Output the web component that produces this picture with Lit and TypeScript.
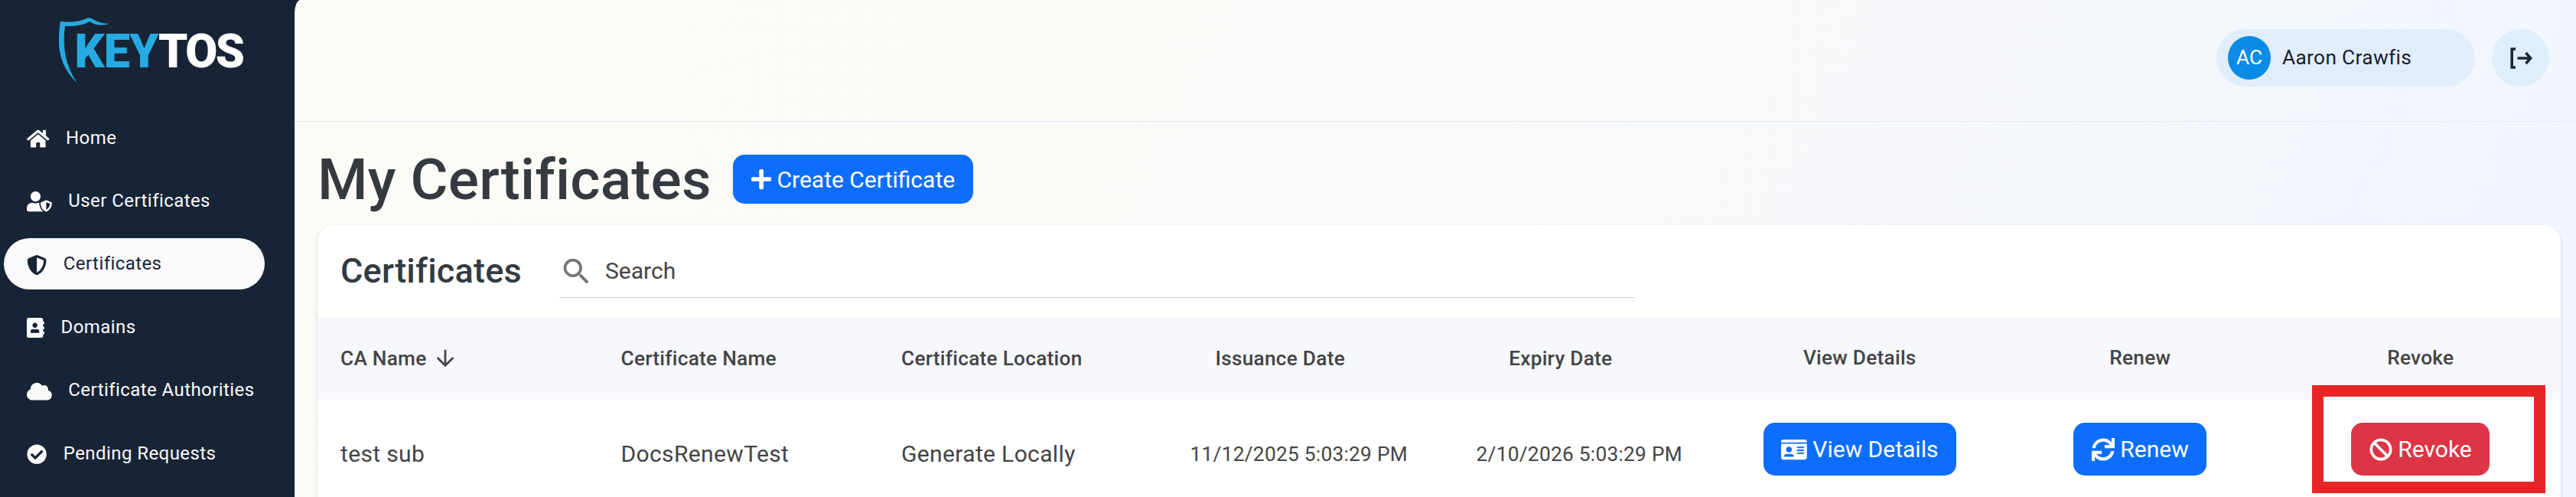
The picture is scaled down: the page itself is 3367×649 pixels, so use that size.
import { LitElement, html, svg, css } from "lit";
import { customElement } from "lit/decorators.js";

type Icon = { w: number; d: string };

const ICONS: Record<string, Icon> = {
  home: { w: 576, d: "M280.37 148.26L96 300.11V464a16 16 0 0 0 16 16l112.06-.29a16 16 0 0 0 15.92-16V368a16 16 0 0 1 16-16h64a16 16 0 0 1 16 16v95.64a16 16 0 0 0 16 16.05L464 480a16 16 0 0 0 16-16V300L295.67 148.26a12.19 12.19 0 0 0-15.3 0zM571.6 251.47L488 182.56V44.05a12 12 0 0 0-12-12h-56a12 12 0 0 0-12 12v72.61L318.47 43a48 48 0 0 0-61 0L4.34 251.47a12 12 0 0 0-1.6 16.9l25.5 31A12 12 0 0 0 45.15 301l235.22-193.74a12.19 12.19 0 0 1 15.3 0L530.9 301a12 12 0 0 0 16.9-1.6l25.5-31a12 12 0 0 0-1.7-16.93z" },
  userShield: { w: 640, d: "M622.3 271.1l-115.2-45c-4.1-1.6-12.6-3.7-22.2 0l-115.2 45c-10.7 4.2-17.7 14-17.7 24.9 0 111.6 68.7 188.8 132.9 213.9 9.6 3.7 18 1.6 22.2 0C558.4 489.9 640 420.5 640 296c0-10.9-7-20.7-17.7-24.9zM496 462.4V273.3l95.5 37.3c-5.6 87.1-60.9 135.4-95.5 151.8zM224 256c70.7 0 128-57.3 128-128S294.7 0 224 0 96 57.3 96 128s57.3 128 128 128zm96 40c0-2.5.8-4.8 1.1-7.2-2.5-.1-4.9-.8-7.5-.8h-16.7c-22.2 10.2-46.9 16-72.9 16s-50.6-5.8-72.9-16h-16.7C60.2 288 0 348.2 0 422.4V464c0 26.5 21.5 48 48 48h352c6.8 0 13.3-1.5 19.2-4-54-42.9-99.2-116.7-99.2-212z" },
  shield: { w: 512, d: "M466.5 83.7l-192-80a48.15 48.15 0 0 0-36.9 0l-192 80C27.7 91.1 16 108.6 16 128c0 198.5 114.5 335.7 221.5 380.3 11.8 4.9 25.1 4.9 36.9 0C360.1 472.6 496 349.3 496 128c0-19.4-11.7-36.9-29.5-44.3zM256.1 446.3l-.1-381 175.9 73.3c-3.3 151.4-82.1 261.1-175.8 307.7z" },
  book: { w: 448, d: "M436 160c6.6 0 12-5.4 12-12v-40c0-6.6-5.4-12-12-12h-20V48c0-26.5-21.5-48-48-48H48C21.5 0 0 21.5 0 48v416c0 26.5 21.5 48 48 48h320c26.5 0 48-21.5 48-48v-48h20c6.6 0 12-5.4 12-12v-40c0-6.6-5.4-12-12-12h-20v-64h20c6.6 0 12-5.4 12-12v-40c0-6.6-5.4-12-12-12h-20v-64h20zm-228-32c35.3 0 64 28.7 64 64s-28.7 64-64 64-64-28.7-64-64 28.7-64 64-64zm112 236.8c0 10.6-10 19.2-22.4 19.2H118.4C106 384 96 375.4 96 364.8v-19.2c0-31.8 30.1-57.6 67.2-57.6h5c12.3 5.1 25.7 8 39.8 8s27.6-2.9 39.8-8h5c37.1 0 67.2 25.8 67.2 57.6v19.2z" },
  cloud: { w: 640, d: "M537.6 226.6c4.1-10.7 6.4-22.4 6.4-34.6 0-53-43-96-96-96-19.7 0-38.1 6-53.3 16.2C367 64.2 315.3 32 256 32c-88.4 0-160 71.6-160 160 0 2.7.1 5.4.2 8.1C40.2 219.8 0 273.2 0 336c0 79.5 64.5 144 144 144h368c70.7 0 128-57.3 128-128 0-61.9-44-113.6-102.4-125.4z" },
  check: { w: 512, d: "M504 256c0 136.967-111.033 248-248 248S8 392.967 8 256 119.033 8 256 8s248 111.033 248 248zM227.314 387.314l184-184c6.248-6.248 6.248-16.379 0-22.627l-22.627-22.627c-6.248-6.249-16.379-6.249-22.628 0L216 308.118l-70.059-70.059c-6.248-6.248-16.379-6.248-22.628 0l-22.627 22.627c-6.248 6.248-6.248 16.379 0 22.627l104 104c6.249 6.249 16.379 6.249 22.628.001z" },
  plus: { w: 448, d: "M416 208H272V64c0-17.67-14.33-32-32-32h-32c-17.67 0-32 14.33-32 32v144H32c-17.67 0-32 14.33-32 32v32c0 17.67 14.33 32 32 32h144v144c0 17.67 14.33 32 32 32h32c17.67 0 32-14.33 32-32V304h144c17.67 0 32-14.33 32-32v-32c0-17.67-14.33-32-32-32z" },
  idCard: { w: 576, d: "M528 32H48C21.5 32 0 53.5 0 80v16h576V80c0-26.5-21.5-48-48-48zM0 432c0 26.5 21.5 48 48 48h480c26.5 0 48-21.5 48-48V128H0v304zm352-232c0-4.4 3.6-8 8-8h144c4.4 0 8 3.6 8 8v16c0 4.4-3.6 8-8 8H360c-4.4 0-8-3.6-8-8v-16zm0 64c0-4.4 3.6-8 8-8h144c4.4 0 8 3.6 8 8v16c0 4.4-3.6 8-8 8H360c-4.4 0-8-3.6-8-8v-16zm0 64c0-4.4 3.6-8 8-8h144c4.4 0 8 3.6 8 8v16c0 4.4-3.6 8-8 8H360c-4.4 0-8-3.6-8-8v-16zM176 192c35.3 0 64 28.7 64 64s-28.7 64-64 64-64-28.7-64-64 28.7-64 64-64zM67.1 396.2C75.5 370.5 99.6 352 128 352h8.2c12.3 5.1 25.7 8 39.8 8s27.6-2.9 39.8-8h8.2c28.4 0 52.5 18.5 60.9 44.2 3.2 9.9-5.2 19.8-15.6 19.8H82.7c-10.4 0-18.8-10-15.6-19.8z" },
  sync: { w: 512, d: "M440.65 12.57l4 82.77A247.16 247.16 0 0 0 255.83 8C134.73 8 33.91 94.92 12.29 209.82A12 12 0 0 0 24.09 224h49.05a12 12 0 0 0 11.67-9.26 175.91 175.91 0 0 1 317-56.94l-101.46-4.86a12 12 0 0 0-12.57 12v47.41a12 12 0 0 0 12 12H500a12 12 0 0 0 12-12V12a12 12 0 0 0-12-12h-47.37a12 12 0 0 0-11.98 12.57zM255.83 432a175.61 175.61 0 0 1-146-77.8l101.8 4.87a12 12 0 0 0 12.57-12v-47.4a12 12 0 0 0-12-12H12a12 12 0 0 0-12 12V500a12 12 0 0 0 12 12h47.35a12 12 0 0 0 12-12.6l-4.15-82.57A247.17 247.17 0 0 0 255.83 504c121.11 0 221.93-86.92 243.55-201.82a12 12 0 0 0-11.8-14.18h-49.05a12 12 0 0 0-11.67 9.26A175.86 175.86 0 0 1 255.83 432z" },
  ban: { w: 512, d: "M256 8C119.034 8 8 119.033 8 256s111.034 248 248 248 248-111.034 248-248S392.967 8 256 8zm130.108 117.892c65.448 65.448 70 165.481 20.677 235.637L150.47 105.216c70.204-49.356 170.226-44.735 235.638 20.676zM125.892 386.108c-65.448-65.448-70-165.481-20.677-235.637L361.53 406.784c-70.203 49.356-170.226 44.736-235.638-20.676z" },
};

const icon = (name: string) => {
  const i = ICONS[name];
  return html`<svg class="icon" viewBox="0 0 ${i.w} 512">${svg`<path d=${i.d}></path>`}</svg>`;
};

const NAV = [
  { icon: "home", label: "Home" },
  { icon: "userShield", label: "User Certificates" },
  { icon: "shield", label: "Certificates", active: true },
  { icon: "book", label: "Domains" },
  { icon: "cloud", label: "Certificate Authorities" },
  { icon: "check", label: "Pending Requests" },
];

@customElement("app-root")
export class AppRoot extends LitElement {
  static styles = css`
    :host {
      display: flex;
      height: 649px;
      overflow: hidden;
      background: #172436;
      color: #444;
      font-family: Roboto, sans-serif;
    }
    * { box-sizing: border-box; }
    svg { display: block; flex: none; }
    .icon { height: 1em; fill: currentColor; }

    .sidebar { flex: none; width: 385px; color: #fbf9fb; }
    .logo { display: block; margin: 20px 0 0 74px; width: 250px; height: 94px; }
    .logo text { font: 900 61px Roboto, sans-serif; }
    nav { display: flex; flex-direction: column; gap: 15.4px; padding: 32.7px 39px 0 5px; }
    .item {
      display: flex; align-items: center; gap: 21.5px;
      height: 67px; padding-left: 30px; border-radius: 34px;
      font-size: 24px; letter-spacing: 0.43px; white-space: nowrap;
    }
    .item .icon { font-size: 26.25px; margin-top: 2px; }
    .item span { margin-bottom: 1px; }
    .item.active { background: #fbf9fb; color: #172436; }

    .content {
      flex: 1; min-width: 0; height: 100%;
      border-top-left-radius: 8px 17px;
      background: linear-gradient(115deg, #fdfbf5 0%, #fbfaf7 32%, #f4f7fc 80%, #f0f5ff 100%);
    }
    header {
      display: flex; justify-content: flex-end; gap: 22px;
      height: 159px; padding: 38px 35px 0 0;
      border-bottom: 1px solid #e2e8f7;
    }
    .user {
      display: flex; align-items: center; width: 338px; height: 75px;
      padding-left: 15px; gap: 15px; border-radius: 38px;
      background: #e1edfb; color: #18202e;
      font-size: 26.25px; letter-spacing: 0.35px;
    }
    .user span { padding-bottom: 1px; }
    .avatar {
      display: flex; align-items: center; justify-content: center;
      width: 56px; height: 57px; border-radius: 50%;
      background: #0a8ce6; color: #fff; letter-spacing: 0;
    }
    .logout {
      display: flex; align-items: center; justify-content: center;
      width: 75px; height: 75px; border-radius: 50%; background: #dfeefb;
    }

    .heading { display: flex; align-items: flex-start; gap: 28.5px; height: 135px; padding: 30px 0 0 30px; }
    .heading .btn { margin-top: 13px; height: 64px; }
    h1 { margin: 0; font-size: 75px; line-height: 90px; font-weight: 500; letter-spacing: 0.22px; color: #343a40; }

    .btn {
      display: flex; align-items: center; gap: 7.5px; height: 69px;
      padding: 0 23.5px; border-radius: 15px;
      background: #0d6efd; color: #fff; font-size: 30px; white-space: nowrap;
    }
    .btn.danger { background: #dc3545; }

    .card {
      height: 400px; margin: 0 20px 0 30px; background: #fff;
      border-radius: 22px 22px 0 0;
      box-shadow: 0 2px 5px rgba(0, 0, 0, 0.15);
    }
    .toolbar { display: flex; height: 120px; padding: 23px 0 0 30px; }
    h2 { margin: 14px 0 0; width: 286px; font-size: 45px; line-height: 45px; font-weight: 500; letter-spacing: 0.22px; color: #343a40; }
    .search {
      display: flex; width: 1406px; height: 72px; padding-top: 15px; gap: 15px;
      border-bottom: 1px solid #c9cdda; font-size: 30px; line-height: 43px;
    }
    .row { display: grid; grid-template-columns: repeat(8, 366.5px); align-items: center; }
    .row > * { display: flex; align-items: center; padding-left: 30px; white-space: nowrap; }
    .row > .mid { justify-content: center; padding-left: 0; }
    .head { height: 108px; background: #f7f8fd; font-size: 26.25px; font-weight: 500; letter-spacing: 0.25px; }
    .head > .sortable { padding-right: 49px; }
    .head > .plain { padding-bottom: 2px; }
    .head svg { margin-left: 7px; }
    .body { height: 140px; font-size: 30px; letter-spacing: 0.36px; }
    .body > * { height: 69px; margin-top: -11px; }
    .body > .text { padding-top: 11px; }
    .body > .date { padding-top: 12px; font-size: 26.25px; letter-spacing: 0.27px; }
    .body .btn { letter-spacing: 0; }

    .marker {
      position: absolute; left: 3022px; top: 503px; width: 305px; height: 141px;
      border: 15px solid #e82525;
    }
  `;

  render() {
    return html`
      <aside class="sidebar">
        <svg class="logo" viewBox="0 0 250 94">
          <path fill="#25aae1" d="M5 8Q22 10 34 6Q39 4 43 3Q47 5 53 8Q60 11 69 11Q60 14 52 12Q47 11 43 8Q32 15 11 14Q5 57 27 88.5Q3 66 3 34Q3 18 5 8Z"></path>
          <text x="23.5" y="67.5" fill="#25aae1" textLength="110">KEY</text>
          <text x="133" y="67.5" fill="#fff" textLength="113">TOS</text>
        </svg>
        <nav>
          ${NAV.map((n) => html`<div class="item ${n.active ? "active" : ""}">${icon(n.icon)}<span>${n.label}</span></div>`)}
        </nav>
      </aside>
      <main class="content">
        <header>
          <div class="user"><span class="avatar">AC</span><span>Aaron Crawfis</span></div>
          <div class="logout">
            <svg width="30" height="30" viewBox="0 0 30 30" fill="none" stroke="#1b2638" stroke-width="3.6">
              <path d="M8 3H3.2V27H8"></path>
              <path d="M10.5 15H28M21.5 8L27.6 15L21.5 22"></path>
            </svg>
          </div>
        </header>
        <section class="heading">
          <h1>My Certificates</h1>
          <div class="btn">${icon("plus")}<span>Create Certificate</span></div>
        </section>
        <section class="card">
          <div class="toolbar">
            <h2>Certificates</h2>
            <div class="search">
              <svg width="45" height="45" viewBox="0 0 24 24" fill="#757575"><path d="M15.5 14h-.79l-.28-.27C15.41 12.59 16 11.11 16 9.5 16 5.91 13.09 3 9.5 3S3 5.91 3 9.5 5.91 16 9.5 16c1.61 0 3.09-.59 4.23-1.57l.27.28v.79l5 4.99L20.49 19l-4.99-5zm-6 0C7.01 14 5 11.99 5 9.5S7.01 5 9.5 5 14 7.01 14 9.5 11.99 14 9.5 14z"></path></svg>
              <span>Search</span>
            </div>
          </div>
          <div class="row head">
            <div>CA Name<svg width="34" height="34" viewBox="0 0 24 24" fill="#444"><path d="M20 12l-1.41-1.41L13 16.17V4h-2v12.17l-5.58-5.59L4 12l8 8 8-8z"></path></svg></div>
            <div>Certificate Name</div>
            <div>Certificate Location</div>
            <div class="mid sortable">Issuance Date</div>
            <div class="mid sortable">Expiry Date</div>
            <div class="mid plain">View Details</div>
            <div class="mid plain">Renew</div>
            <div class="mid plain">Revoke</div>
          </div>
          <div class="row body">
            <div class="text">test sub</div>
            <div class="text">DocsRenewTest</div>
            <div class="text">Generate Locally</div>
            <div class="mid date">11/12/2025 5:03:29 PM</div>
            <div class="mid date">2/10/2026 5:03:29 PM</div>
            <div class="mid"><div class="btn">${icon("idCard")}<span>View Details</span></div></div>
            <div class="mid"><div class="btn">${icon("sync")}<span>Renew</span></div></div>
            <div class="mid"><div class="btn danger">${icon("ban")}<span>Revoke</span></div></div>
          </div>
        </section>
      </main>
      <div class="marker"></div>
    `;
  }
}
